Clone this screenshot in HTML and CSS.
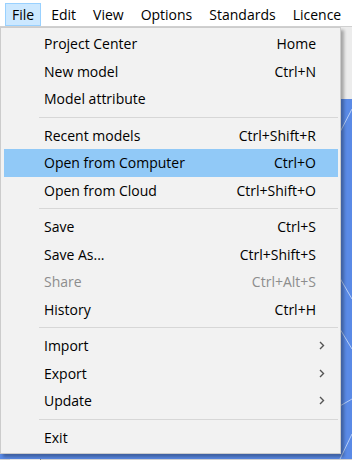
FILE: index.html
```html
<!DOCTYPE html>
<html>
<head>
<meta charset="utf-8">
<link rel="stylesheet" href="styles.css">
</head>
<body>
<div class="app">
  <div class="menubar">
    <span class="mb-item active">File</span>
    <span class="mb-item">Edit</span>
    <span class="mb-item">View</span>
    <span class="mb-item">Options</span>
    <span class="mb-item">Standards</span>
    <span class="mb-item">Licence</span>
  </div>
  <div class="workspace">
    <div class="toolbar"></div>
    <div class="canvas">
      <svg class="grid" width="352" height="360" viewBox="0 0 352 360">
        <g stroke="#cfe0fb" stroke-width="1" fill="none" opacity="0.8">
          <path d="M352 10 L300 110 L352 200"/>
          <path d="M340 230 L352 250"/>
          <path d="M300 330 L352 300"/>
          <path d="M340 360 L352 335"/>
        </g>
      </svg>
    </div>
    <div class="statusbar"><span class="sb-box"></span></div>
  </div>

  <div class="menu">
    <div class="item"><span class="label">Project Center</span><span class="key">Home</span></div>
    <div class="item"><span class="label">New model</span><span class="key">Ctrl+N</span></div>
    <div class="item"><span class="label">Model attribute</span><span class="key"></span></div>
    <div class="sep"></div>
    <div class="item"><span class="label">Recent models</span><span class="key">Ctrl+Shift+R</span></div>
    <div class="item hover"><span class="label">Open from Computer</span><span class="key">Ctrl+O</span></div>
    <div class="item"><span class="label">Open from Cloud</span><span class="key">Ctrl+Shift+O</span></div>
    <div class="sep"></div>
    <div class="item"><span class="label">Save</span><span class="key">Ctrl+S</span></div>
    <div class="item"><span class="label">Save As...</span><span class="key">Ctrl+Shift+S</span></div>
    <div class="item disabled"><span class="label">Share</span><span class="key">Ctrl+Alt+S</span></div>
    <div class="item"><span class="label">History</span><span class="key">Ctrl+H</span></div>
    <div class="sep"></div>
    <div class="item sub"><span class="label">Import</span><span class="arrow"><svg width="6" height="9" viewBox="0 0 6 9"><path d="M1 1 L4.5 4.5 L1 8" stroke="#555" stroke-width="1.4" fill="none"/></svg></span></div>
    <div class="item sub"><span class="label">Export</span><span class="arrow"><svg width="6" height="9" viewBox="0 0 6 9"><path d="M1 1 L4.5 4.5 L1 8" stroke="#555" stroke-width="1.4" fill="none"/></svg></span></div>
    <div class="item sub"><span class="label">Update</span><span class="arrow"><svg width="6" height="9" viewBox="0 0 6 9"><path d="M1 1 L4.5 4.5 L1 8" stroke="#555" stroke-width="1.4" fill="none"/></svg></span></div>
    <div class="sep"></div>
    <div class="item"><span class="label">Exit</span><span class="key"></span></div>
  </div>
</div>
</body>
</html>
```
FILE: styles.css
```css
html, body {
  margin: 0;
  padding: 0;
}
body {
  width: 352px;
  height: 460px;
  overflow: hidden;
  font-family: "Open Sans", "Noto Sans", "Liberation Sans", sans-serif;
  font-size: 14px;
  color: #000;
}
.app {
  position: relative;
  width: 352px;
  height: 460px;
  display: flex;
  flex-direction: column;
  background: #ffffff;
}
.menubar {
  height: 27px;
  display: flex;
  align-items: flex-start;
  padding: 3px 0 0 5px;
  box-sizing: border-box;
  background: #fff;
  white-space: nowrap;
}
.mb-item {
  height: 23px;
  line-height: 22px;
  padding: 0 6px;
  margin-right: 3px;
  box-sizing: border-box;
  border: 1px solid transparent;
}
.mb-item.active {
  background: #cce8ff;
  border-color: #99d1ff;
}
.workspace {
  flex: 1;
  display: flex;
  flex-direction: column;
  background: #f0f0f0;
}
.toolbar {
  height: 72px;
  background: #ececec;
  border-top: 1px solid #d0d0d0;
}
.canvas {
  flex: 1;
  background: #5a8ae6;
  overflow: hidden;
}
.grid {
  display: block;
}
.statusbar {
  height: 7px;
  background: #d4d4d4;
  display: flex;
  padding-left: 10px;
}
.sb-box {
  width: 30px;
  background: #e8e8e8;
  border-right: 1px solid #888;
}
.menu {
  position: absolute;
  left: 0;
  top: 27px;
  width: 341px;
  box-sizing: border-box;
  background: #f2f2f2;
  border: 1px solid #cccccc;
  box-shadow: 3px 3px 3px rgba(0, 0, 0, 0.3);
  padding: 2px 2px 2px 3px;
  display: flex;
  flex-direction: column;
}
.item {
  height: 27.5px;
  display: flex;
  align-items: center;
  justify-content: space-between;
  padding: 0 22px 0 40px;
  box-sizing: border-box;
  white-space: nowrap;
}
.item.hover {
  background: #91c9f7;
}
.item.disabled {
  color: #8d8d8d;
}
.item.sub {
  padding-right: 13px;
}
.arrow {
  display: flex;
  align-items: center;
}
.sep {
  height: 9px;
  display: flex;
  align-items: center;
  padding-left: 35px;
}
.sep::before {
  content: "";
  flex: 1;
  height: 1px;
  background: #d7d7d7;
}
```
